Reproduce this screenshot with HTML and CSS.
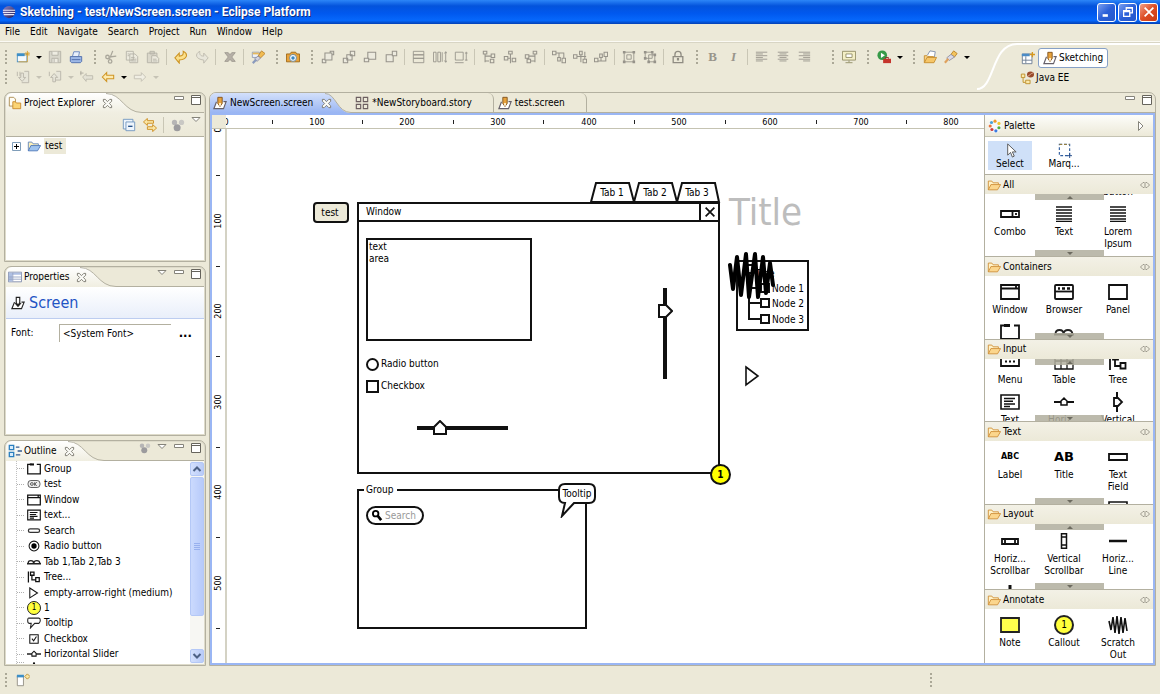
FILE: index.html
```html
<!DOCTYPE html>
<html lang="en">
<head>
  <meta charset="UTF-8">
  <title>Sketching - test/NewScreen.screen - Eclipse Platform</title>
  <link rel="stylesheet" href="styles.css">
</head>
<body>

  <!-- icon sprite -->
  <svg class="sprite" width="0" height="0" aria-hidden="true">
    <defs>
      <linearGradient id="tab-light" x1="0" y1="0" x2="0" y2="1"><stop offset="0" stop-color="#fff"/><stop offset="1" stop-color="#f0eee1"/></linearGradient>
      <linearGradient id="tab-blue" x1="0" y1="0" x2="0" y2="1"><stop offset="0" stop-color="#d3e0fb"/><stop offset="1" stop-color="#99b5f3"/></linearGradient>
      <linearGradient id="ball" x1="0" y1="0" x2="1" y2="1"><stop offset="0" stop-color="#8f86c8"/><stop offset="1" stop-color="#1d1750"/></linearGradient>
    </defs>
    <symbol id="eclipse" viewBox="0 0 16 16"><circle cx="8" cy="8" r="7" fill="url(#ball)"/><path d="M1 6h14M1 8.500h14M2 11h12" stroke="#e8e6f5" stroke-width="1.200"/></symbol>
    <symbol id="new" viewBox="0 0 16 16"><rect x="1.500" y="4.500" width="11" height="9" fill="#f4f9fd" stroke="#4b8fc0"/><path d="M1 4h9v3H1z" fill="#3c8fc7"/><path d="M3 13.500h10V8" fill="none" stroke="#d9a33b"/><path d="M13 1v7M9.500 4.500h7M11 2.500l4 4M15 2.500l-4 4" stroke="#d99c22"/></symbol>
    <symbol id="save" viewBox="0 0 16 16"><path d="M1.500 1.500h13v13h-13z" fill="#d8d6cb" stroke="#b2b0a6"/><path d="M4.500 2v4h7V2M4.500 14V9.500h7V14M7 10v4" fill="#eeece2" stroke="#b2b0a6"/></symbol>
    <symbol id="print" viewBox="0 0 16 16"><path d="M4 7l1.500-5H12L11 7" fill="#e8f0fb" stroke="#6080bc"/><path d="M1.500 7.500h13V13l-1.500 1.500H3L1.500 13z" fill="#9db8e6" stroke="#4a69a9"/><path d="M3 11h10" stroke="#4a69a9"/></symbol>
    <symbol id="cut" viewBox="0 0 16 16" fill="none" stroke="#aaa79b" stroke-width="1.500"><path d="M10 1L6 11M6 8l8-1"/><circle cx="4" cy="8" r="2"/><circle cx="7" cy="13" r="2"/></symbol>
    <symbol id="copy" viewBox="0 0 16 16" fill="#eceade" stroke="#b5b2a7"><path d="M1.500 1.500h8v10h-8zM5.500 4.500h6l3 3v7h-9z"/><path d="M7 8.500h4M7 10.500h6M7 12.500h6M3 4.500h2M3 6.500h2"/></symbol>
    <symbol id="paste" viewBox="0 0 16 16" fill="#dbd8cb" stroke="#b5b2a7"><path d="M1.500 3.500h11v11h-11zM4.500 1.500h5v3h-5z"/><path d="M6.500 6.500h5l3 3v5h-8z" fill="#eceade"/><path d="M8 10.500h4M8 12.500h5"/></symbol>
    <symbol id="undo" viewBox="0 0 16 16"><path d="M1 9l5-5.500v3.500C10 7 11 5 10.500 1.500c6 3 5 9-4.500 10V15z" fill="#fbe08b" stroke="#cc9322" stroke-width="1.200"/></symbol>
    <symbol id="redo" viewBox="0 0 16 16"><path d="M15 9l-5-5.500v3.500C6 7 5 5 5.500 1.500c-6 3-5 9 4.500 10V15z" fill="#e8e6da" stroke="#bbb8ac"/></symbol>
    <symbol id="delete" viewBox="0 0 16 16"><path d="M2 3l4 5-4 5h4l2-2.500L10 13h4l-4-5 4-5h-4L8 5.500 6 3z" fill="#b5afa6" stroke="#9f9a90"/></symbol>
    <symbol id="torch" viewBox="0 0 16 16"><path d="M8 5l3-4 4 3-3 4z" fill="#f3c45e" stroke="#b97f1f"/><path d="M3 9l5-4 4 3-6 4z" fill="#d9d9e6" stroke="#8f8f9f"/><path d="M1 14.500L5 10" stroke="#dfa25e" stroke-width="2.500"/></symbol>
    <symbol id="wand" viewBox="0 0 16 16"><path d="M1.500 2.500h8v6h-8z" fill="#eef1f8" stroke="#8f9ab5"/><path d="M2 3h7v2H2z" fill="#e6b95c"/><path d="M8 7l4-6 4 3-5 5z" fill="#f1bc52" stroke="#b9812a"/><path d="M4 10l4-3 3 2-4 4z" fill="#d3d3e0" stroke="#8f8f9f"/><path d="M2 15l4-4" stroke="#8b9bbd" stroke-width="2.500"/></symbol>
    <symbol id="camera" viewBox="0 0 16 16"><path d="M.5 4.500h4l1.500-2h5l1.500 2h3v9H.5z" fill="#e9a33a" stroke="#9a6514"/><circle cx="8" cy="9" r="4" fill="#f4f8fb" stroke="#65859c"/><circle cx="8" cy="9" r="2" fill="#3b87c2"/></symbol>
    <symbol id="front" viewBox="0 0 16 16" fill="#eceade" stroke="#96938a" stroke-width="1.200"><path d="M10.500 1.500h4v4h-4zM1.500 10.500h4v4h-4z"/><path d="M4.500 3.500h8v8h-8z"/></symbol>
    <symbol id="forward" viewBox="0 0 16 16" fill="#eceade" stroke="#96938a" stroke-width="1.200"><path d="M1.500 9.500h5v5h-5zM5.500 5.500h6v6h-6zM9.500 1.500h5v5h-5z"/></symbol>
    <symbol id="backward" viewBox="0 0 16 16" fill="#eceade" stroke="#96938a" stroke-width="1.200"><path d="M5.500 2.500h9v8h-9z"/><path d="M1.500 9.500h5v4h-5z"/></symbol>
    <symbol id="back" viewBox="0 0 16 16" fill="#eceade" stroke="#96938a" stroke-width="1.200"><path d="M2.500 5.500h8v8h-8z"/><path d="M9.500 1.500h5v5h-5z"/></symbol>
    <symbol id="same-w" viewBox="0 0 16 16" fill="none" stroke="#96938a"><path d="M1.500 1.500h12v4h-12zM1.500 5.500h12v4h-12zM1.500 9.500h12v5h-12z"/></symbol>
    <symbol id="same-h" viewBox="0 0 16 16" fill="none" stroke="#96938a"><path d="M.5 2.500h3v11h-3zM5.500 2.500h3v11h-3zM10.500 2.500v11M14.500 2v12M13 4l1.500-2L16 4M13 12l1.500 2 1.500-2"/></symbol>
    <symbol id="same-s" viewBox="0 0 16 16" fill="none" stroke="#96938a"><path d="M1.500 2.500h9v9h-9zM1 14.500h10M14 2v10M12.500 3.500h3M12.500 11.500h3"/></symbol>
    <symbol id="al-l" viewBox="0 0 16 16" fill="none" stroke="#96938a" stroke-width="1.200"><path d="M1.500 1.500h4v3h-4zM3.500 5v9M4 12.500h4M9.500 10.500h4v4h-4zM10.500 4.500h4v4h-4zM4 7h6"/></symbol>
    <symbol id="al-c" viewBox="0 0 16 16" fill="none" stroke="#96938a" stroke-width="1.200"><path d="M6.500 1.500h4v3h-4zM8.500 5v10M1.500 7.500h4v4h-4zM10.500 9.500h4v4h-4zM6 9.500h3"/></symbol>
    <symbol id="al-r" viewBox="0 0 16 16" fill="none" stroke="#96938a" stroke-width="1.200"><path d="M10.500 1.500h4v3h-4zM12.500 5v9M8 12.500h5M1.500 5.500h4v4h-4zM3.500 10.500h4v4h-4zM6 7h6"/></symbol>
    <symbol id="al-t" viewBox="0 0 16 16" fill="none" stroke="#96938a" stroke-width="1.200"><path d="M.5 1.500h4v4h-4zM5 3.500h9M6.500 8.500h3v4h-3zM11.500 9.500h4v5h-4zM8 4v4M13.500 4v5"/></symbol>
    <symbol id="al-m" viewBox="0 0 16 16" fill="none" stroke="#96938a" stroke-width="1.200"><path d="M.5 5.500h4v4h-4zM5 7.500h10M7.500 1.500h3v4h-3zM9 6v8M11.500 10.500h4v4h-4zM13.500 2v8"/></symbol>
    <symbol id="al-b" viewBox="0 0 16 16" fill="none" stroke="#96938a" stroke-width="1.200"><path d="M.5 9.500h4v4h-4zM5 12.500h8M6.500 4.500h3v4h-3zM11.500 2.500h4v5h-4zM8 9v4M13.500 8v5"/></symbol>
    <symbol id="group" viewBox="0 0 16 16" fill="none" stroke="#96938a"><path d="M2.500 2.500h11v11h-11zM5.500 5.500h5v5h-5z"/><path d="M1 1h3v3H1zM12 1h3v3h-3zM1 12h3v3H1zM12 12h3v3h-3z" fill="#96938a" stroke="none"/></symbol>
    <symbol id="ungroup" viewBox="0 0 16 16" fill="none" stroke="#96938a"><path d="M2.500 2.500h8v7h-8zM6.500 5.500h7v8h-7z"/><path d="M1 1h3v3H1zM9 1h3v3H9zM1 8h3v3H1zM12 12h3v3h-3zM5 12h3v3H5zM12 4h3v3h-3z" fill="#96938a" stroke="none"/></symbol>
    <symbol id="lock" viewBox="0 0 16 16" fill="none" stroke="#8f8c82" stroke-width="1.500"><path d="M2.500 7.500h11v7h-11zM4.500 7V5a3.500 3.500 0 0 1 7 0v2"/><path d="M8 9v3" stroke-width="2.500"/></symbol>
    <symbol id="t-left" viewBox="0 0 16 16" stroke="#98958b"><path d="M1 2.500h13M1 4.500h8M1 6.500h13M1 8.500h8M1 10.500h13M1 12.500h8"/></symbol>
    <symbol id="t-center" viewBox="0 0 16 16" stroke="#98958b"><path d="M2 2.500h12M4 4.500h8M2 6.500h12M4 8.500h8M2 10.500h12M4 12.500h8"/></symbol>
    <symbol id="t-right" viewBox="0 0 16 16" stroke="#98958b"><path d="M2 2.500h13M7 4.500h8M2 6.500h13M7 8.500h8M2 10.500h13M7 12.500h8"/></symbol>
    <symbol id="monitor" viewBox="0 0 16 16"><path d="M.5 1.500h15v10H.5z" fill="#f4efc6" stroke="#8f8a62"/><path d="M4.500 4.500h7v4h-7z" fill="#fff" stroke="#8f8a62"/><path d="M8 12v2M4 14.500h8" stroke="#8f8a62"/></symbol>
    <symbol id="run" viewBox="0 0 16 16"><circle cx="6" cy="6" r="5.500" fill="#379a48"/><path d="M4.500 3v6l4.500-3z" fill="#fff"/><path d="M7 10h9v5H7z" fill="#c5342c"/><path d="M10 10V8.500h3V10" fill="none" stroke="#8e1d1d"/></symbol>
    <symbol id="open" viewBox="0 0 16 16"><path d="M5 6l3-5 6 1-1 6" fill="#fff" stroke="#7b8ba9"/><path d="M1.500 14.500V6.500h3l1 1H12v2" fill="#f9d488" stroke="#c58b2d"/><path d="M1.500 14.500l3-6h11l-3 6z" fill="#f6c668" stroke="#c58b2d"/></symbol>
    <symbol id="folder" viewBox="0 0 16 16"><path d="M1.500 13.500v-10h4l1.500 2h6v2" fill="#fff2c8" stroke="#cf8e36"/><path d="M1.500 13.500l3-6h11l-3.500 6z" fill="#fbd68d" stroke="#cf8e36"/></symbol>
    <symbol id="project" viewBox="0 0 16 16"><path d="M1.500 13.500v-10h4l1.500 2h6v2" fill="#fdf1b9" stroke="#5f84bd"/><path d="M1.500 13.500l3-6h11l-3.500 6z" fill="#9fc4ef" stroke="#4a75b8"/></symbol>
    <symbol id="explorer" viewBox="0 0 16 16"><path d="M1.500 11.500v-10h5l2 2v8z" fill="#fffdf5" stroke="#a8894b"/><path d="M5.500 14.500v-8h3l1 1.500h5v6.500z" fill="#fbd475" stroke="#c8882a"/></symbol>
    <symbol id="collapse" viewBox="0 0 16 16" fill="#eef5fc" stroke="#6d93be"><path d="M1.500 1.500h11v11h-11z"/><path d="M4.500 4.500h10v10h-10z"/><path d="M7 9.500h5" stroke="#1e4c86" stroke-width="1.500"/></symbol>
    <symbol id="link" viewBox="0 0 16 16" fill="#fae6a4" stroke="#cc8a1d"><path d="M.5 4.500l4.500-4v2.500h7v3H5v2.500z"/><path d="M15.500 11.500l-4.500 4V13H5v-3h6V7.500z"/></symbol>
    <symbol id="focus" viewBox="0 0 16 16" fill="#b6b5b5"><circle cx="4" cy="5" r="3"/><circle cx="12" cy="5" r="3" fill="#c9c8c4"/><circle cx="7" cy="11" r="4" fill="#9c9b9e"/></symbol>
    <symbol id="props" viewBox="0 0 16 16"><path d="M.5 2.500h15v11H.5z" fill="#fff" stroke="#7b88a8"/><path d="M1 3h14v2.500H1zM1 3h4v10H1z" fill="#aebfe2"/><path d="M5.500 3v10M1 8h14M1 10.500h14" stroke="#93a1c1"/></symbol>
    <symbol id="outline" viewBox="0 0 16 16" fill="#d9ecfa" stroke="#2b7fc0" stroke-width="1.500"><path d="M1.500 1.500h5v5h-5zM1.500 9.500h5v5h-5z"/><path d="M9 3.500h4M11 8h5M9 12.500h5" stroke="#345c92"/></symbol>
    <symbol id="pencil" viewBox="0 0 16 16"><path d="M4 6.500L1 14.500h11l3-8h-3" fill="#fff" stroke="#655f69" stroke-width="1.300"/><path d="M5.500 1.500h5v7L8 12 5.500 8.500z" fill="#e7a23c" stroke="#7b4e1b"/><path d="M7 8h2v3H7z" fill="#fff3d6"/></symbol>
    <symbol id="screen" viewBox="0 0 16 16" fill="#fff" stroke="#222" stroke-width="1.300"><path d="M4 7L1 14.500h11l3-7.500h-3"/><path d="M6 1.500h4v6L8 11 6 7.500zM4.500 8L8 12l3.500-4"/></symbol>
    <symbol id="story" viewBox="0 0 16 16" fill="none" stroke="#6c5f60" stroke-width="1.300"><path d="M1.500 1.500h5v5h-5zM9.500 1.500h5v5h-5zM1.500 9.500h5v5h-5zM9.500 9.500h5v5h-5z"/></symbol>
    <symbol id="persp" viewBox="0 0 16 16"><path d="M1.500 3.500h11v11h-11z" fill="#fff" stroke="#67788f"/><path d="M1 3h9v3H1z" fill="#4c8cc6"/><path d="M5.500 6v8M1.500 10.500h11" stroke="#67788f"/><path d="M13 1v6M10 4h6" stroke="#d7981e" stroke-width="1.500"/></symbol>
    <symbol id="javaee" viewBox="0 0 16 16"><path d="M1.500 3.500h4v4h-4zM3.500 8v5H6M6.500 10.500h5v4h-5z" fill="#fbe9ab" stroke="#bb8c26"/><ellipse cx="12" cy="4" rx="4" ry="3.500" fill="#9a4a2a"/><path d="M9 6c2-1 3-3 6-4" stroke="#e4b9a0" fill="none"/></symbol>
    <symbol id="fastview" viewBox="0 0 16 16"><path d="M1.500 3.500h7v11h-7z" fill="#fff" stroke="#8f8c80"/><path d="M1 2h8v3H1z" fill="#3c8fc7"/><path d="M13 1l3 3-3 3-3-3z" fill="#fae6a4" stroke="#b88a2d"/></symbol>
    <symbol id="arr-l" viewBox="0 0 16 16"><path d="M1.500 8l5-5v3h8v4h-8v3z" fill="#fdeaae" stroke="#cf9524" stroke-width="1.200"/></symbol>
    <symbol id="arr-r" viewBox="0 0 16 16"><path d="M14.500 8l-5-5v3h-8v4h8v3z" fill="#f0eee3" stroke="#c2bfb2"/></symbol>
    <symbol id="arr-last" viewBox="0 0 16 16"><path d="M3 8l4-4v2.500h7.500v4H7v2.500z" fill="#e4e2d6" stroke="#bcb9ad"/><path d="M1 1v5M0 3.500h4" stroke="#aaa79b"/></symbol>
    <symbol id="ann-n" viewBox="0 0 16 16" fill="#e7e5d9" stroke="#b7b4a8"><path d="M9.500 1.500h5v13h-8M1.500 2v5M4.500 2v5"/><path d="M5.500 3.500h3v5h2.500L7 13 3 8.500h2.500z"/></symbol>
    <symbol id="ann-p" viewBox="0 0 16 16" fill="#e7e5d9" stroke="#b7b4a8"><path d="M9.500 1.500h5v10h-8M1.500 2v5"/><path d="M5.500 13.500h3v-5h2.500L7 4 3 8.500h2.500z"/></symbol>
    <symbol id="x" viewBox="0 0 12 12"><path d="M1.500 1.500h2L6 4l2.500-2.500h2v2L8 6l2.500 2.500v2h-2L6 8l-2.500 2.500h-2v-2L4 6 1.500 3.500z" fill="#fdfdf9" stroke="#77756b"/></symbol>
    <symbol id="min" viewBox="0 0 12 12"><path d="M1.500 2.500h9v3h-9z" fill="#fff" stroke="#85837a"/></symbol>
    <symbol id="max" viewBox="0 0 12 12"><path d="M1.500 1.500h9v9h-9zM1.500 3.500h9" fill="#fff" stroke="#66645c"/></symbol>
    <symbol id="menu-dn" viewBox="0 0 12 12"><path d="M2 2.500h8L6 6.500z" fill="#fff" stroke="#85837a"/></symbol>
    <symbol id="palette" viewBox="0 0 16 16"><circle cx="8" cy="8" r="7.500" fill="#f4f7fb"/><g><circle cx="8" cy="2.500" r="1.800" fill="#f09a26"/><circle cx="12.500" cy="5" r="1.800" fill="#f2c72c"/><circle cx="12.500" cy="10" r="1.800" fill="#54ad3e"/><circle cx="9" cy="13.500" r="1.800" fill="#3c7be0"/><circle cx="4.500" cy="12" r="1.800" fill="#cc3e3e"/><circle cx="2.500" cy="8" r="1.800" fill="#e9763b"/><circle cx="4" cy="4" r="1.800" fill="#47a2d8"/></g></symbol>
    <symbol id="pin" viewBox="0 0 12 8"><path d="M5 1.500H4L1.500 4 4 6.500h1M7 1.500h1L10.500 4 8 6.500H7M6 1v6" fill="none" stroke="#9b988c"/></symbol>

    <!-- widget glyphs, shared by outline and palette -->
    <symbol id="w-group" viewBox="0 0 20 16" fill="none" stroke="#111" stroke-width="1.800"><path d="M7 1.500H1v13.500h18V1.500h-5"/><path d="M4 1.500h6" stroke-width="3"/></symbol>
    <symbol id="w-ok" viewBox="0 0 20 16" fill="#eee" stroke="#222"><rect x="1.500" y="3" width="17" height="10" rx="4"/><circle cx="7" cy="8" r="2"/><path d="M11 5.500v5M14 5.500L11 8l3 2.500"/></symbol>
    <symbol id="w-window" viewBox="0 0 20 16" fill="none" stroke="#111" stroke-width="1.800"><path d="M1 1h18v14H1zM1 4.500h18M16 2v2"/></symbol>
    <symbol id="w-browser" viewBox="0 0 20 16" fill="none" stroke="#111" stroke-width="1.800"><rect x="1" y="1" width="18" height="14" rx="1"/><path d="M1 7.500h18"/><path d="M4 4.500h2M8 4.500h3M13 4.500h3" stroke-width="2.500"/></symbol>
    <symbol id="w-panel" viewBox="0 0 20 16"><path d="M1 1h18v14H1z" fill="none" stroke="#111" stroke-width="1.800"/></symbol>
    <symbol id="w-area" viewBox="0 0 20 16" fill="none" stroke="#111" stroke-width="1.600"><path d="M1 1h18v14H1zM4 4.500h11M4 7.200h9M4 10h11M4 12.500h6"/></symbol>
    <symbol id="w-search" viewBox="0 0 20 16"><rect x="2" y="5" width="16" height="5" rx="2.500" fill="none" stroke="#333" stroke-width="1.800"/></symbol>
    <symbol id="w-radio" viewBox="0 0 20 16"><circle cx="10" cy="8" r="7" fill="none" stroke="#111" stroke-width="1.500"/><circle cx="10" cy="8" r="3.800"/></symbol>
    <symbol id="w-tabs" viewBox="0 0 20 16" fill="none" stroke="#222" stroke-width="1.800"><path d="M1.500 10q0-4 4-4t4 4q.5-4 4.500-4t4.500 4M0 10.500h20"/></symbol>
    <symbol id="w-tree" viewBox="0 0 20 16" fill="none" stroke="#111" stroke-width="1.800"><path d="M2 0v16M5 1h5v4.500H5zM7 6v6h5M12.500 9h5v5.500h-5z"/></symbol>
    <symbol id="w-tri" viewBox="0 0 20 16"><path d="M4 .8l11 7.200-11 7z" fill="none" stroke="#111" stroke-width="1.500"/></symbol>
    <symbol id="w-tip" viewBox="0 0 20 16"><path d="M3 1h14q2 0 2 3t-2 4.500h-6L5 15l1-6.500H3Q1 8.500 1 4.500T3 1z" fill="none" stroke="#222" stroke-width="1.500"/></symbol>
    <symbol id="w-check" viewBox="0 0 20 16" fill="none" stroke="#111" stroke-width="1.500"><path d="M4 2h12v12H4zM7 7.500l2.500 3 4-6"/></symbol>
    <symbol id="w-hs" viewBox="0 0 20 16"><path d="M0 8h20" stroke="#111" stroke-width="2"/><path d="M7 7l3-3 3 3v4H7z" fill="#fff" stroke="#111" stroke-width="1.500"/></symbol>
    <symbol id="w-vs" viewBox="0 0 20 20"><path d="M9 0v20" stroke="#111" stroke-width="2"/><path d="M6 6h4l4 4-4 4H6z" fill="#fff" stroke="#111" stroke-width="1.800"/></symbol>
    <symbol id="w-combo" viewBox="0 0 20 16"><path d="M1 5h18v6H1zM12.500 5v6M16 7v2" fill="none" stroke="#111" stroke-width="1.800"/></symbol>
    <symbol id="w-lines" viewBox="0 0 20 16"><path d="M2 1h16M2 4h16M2 7h16M2 10h16M2 13h16M2 15.500h16" stroke="#111" stroke-width="1.500"/></symbol>
    <symbol id="w-menu" viewBox="0 0 20 16"><path d="M1 3h18v9H1z" fill="none" stroke="#111" stroke-width="1.800"/><path d="M5 7.500h2M9 7.500h2M13 7.500h2" stroke="#111" stroke-width="2"/></symbol>
    <symbol id="w-table" viewBox="0 0 20 16"><path d="M1 1h18v14H1zM7 1v14M13 1v14M1 7h18" fill="none" stroke="#111" stroke-width="1.300"/></symbol>
    <symbol id="w-field" viewBox="0 0 20 16"><path d="M1 5h18v6H1z" fill="none" stroke="#111" stroke-width="1.800"/></symbol>
    <symbol id="w-hbar" viewBox="0 0 20 16"><path d="M2 6h16v5H2zM5 6v5M15 6v5" fill="none" stroke="#111" stroke-width="1.800"/></symbol>
    <symbol id="w-vbar" viewBox="0 0 20 16"><path d="M7.500.8h5v14.500h-5zM7.500 4h5M7.500 12h5" fill="none" stroke="#111" stroke-width="1.500"/></symbol>
    <symbol id="w-line" viewBox="0 0 20 16"><path d="M1 8h18" stroke="#111" stroke-width="2.500"/></symbol>
    <symbol id="w-vline" viewBox="0 0 20 16"><path d="M10 0v16" stroke="#111" stroke-width="3"/></symbol>
    <symbol id="w-note" viewBox="0 0 20 16"><path d="M1 1h18v14H1z" fill="#ffff4d" stroke="#222" stroke-width="1.800"/></symbol>
    <symbol id="w-scratch" viewBox="0 0 20 20"><path d="M1 6l2 9L5 2l2 16L9 1l2 18 2-17 2 16 2-15 2 13" fill="none" stroke="#111" stroke-width="1.600"/></symbol>
    <symbol id="w-cursor" viewBox="0 0 16 16"><path d="M5 1v12l3-3 2 5 2-1-2-4.500h4z" fill="#fff" stroke="#555"/></symbol>
    <symbol id="w-marquee" viewBox="0 0 16 16"><path d="M2.500 1.500h11v12h-11z" fill="none" stroke="#2e5c9e" stroke-width="1.200" stroke-dasharray="3 2"/><path d="M2.500 1.500h11" stroke="#a8842c" stroke-dasharray="3 2"/><path d="M11 13.500h5M13.500 11v5" stroke="#224a88"/></symbol>
  </svg>

  <header class="titlebar">
    <svg class="app-icon"><use href="#eclipse"/></svg>
    <h1>Sketching - test/NewScreen.screen - Eclipse Platform</h1>
    <div class="win-buttons">
      <button aria-label="Minimize"><svg viewBox="0 0 16 16"><path d="M3 12h6" stroke="#fff" stroke-width="3"/></svg></button>
      <button aria-label="Restore"><svg viewBox="0 0 16 16" fill="none" stroke="#fff" stroke-width="1.500"><path d="M6 6V3h7v6h-3M6 3.500h7M3 6.500h7V13H3zM3 7.500h7"/></svg></button>
      <button class="close" aria-label="Close"><svg viewBox="0 0 16 16"><path d="M3 3l10 10M13 3L3 13" stroke="#fff" stroke-width="2"/></svg></button>
    </div>
  </header>

  <nav class="menubar">
    <button>File</button><button>Edit</button><button>Navigate</button><button>Search</button><button>Project</button><button>Run</button><button>Window</button><button>Help</button>
  </nav>

  <div class="coolbar">
    <div class="toolbars">
      <div class="toolbar">
        <span class="grip first"></span>
        <button class="tool" aria-label="New"><svg><use href="#new"/></svg></button><button class="drop" aria-label="New menu"></button>
        <button class="tool" aria-label="Save"><svg><use href="#save"/></svg></button>
        <button class="tool" aria-label="Print"><svg><use href="#print"/></svg></button>
        <span class="grip"></span>
        <button class="tool" aria-label="Cut"><svg><use href="#cut"/></svg></button>
        <button class="tool" aria-label="Copy"><svg><use href="#copy"/></svg></button>
        <button class="tool" aria-label="Paste"><svg><use href="#paste"/></svg></button>
        <span class="sep"></span>
        <button class="tool" aria-label="Undo"><svg><use href="#undo"/></svg></button>
        <button class="tool" aria-label="Redo"><svg><use href="#redo"/></svg></button>
        <span class="sep"></span>
        <button class="tool" aria-label="Delete"><svg><use href="#delete"/></svg></button>
        <span class="sep"></span>
        <button class="tool" aria-label="Search"><svg><use href="#wand"/></svg></button>
        <span class="grip"></span>
        <button class="tool" aria-label="Snapshot"><svg><use href="#camera"/></svg></button>
        <span class="grip"></span>
        <button class="tool" aria-label="Bring to front"><svg><use href="#front"/></svg></button>
        <button class="tool" aria-label="Bring forward"><svg><use href="#forward"/></svg></button>
        <button class="tool" aria-label="Send backward"><svg><use href="#backward"/></svg></button>
        <button class="tool" aria-label="Send to back"><svg><use href="#back"/></svg></button>
        <span class="sep"></span>
        <button class="tool" aria-label="Match width"><svg><use href="#same-w"/></svg></button>
        <button class="tool" aria-label="Match height"><svg><use href="#same-h"/></svg></button>
        <button class="tool" aria-label="Match size"><svg><use href="#same-s"/></svg></button>
        <span class="sep"></span>
        <button class="tool" aria-label="Align left"><svg><use href="#al-l"/></svg></button>
        <button class="tool" aria-label="Align center"><svg><use href="#al-c"/></svg></button>
        <button class="tool" aria-label="Align right"><svg><use href="#al-r"/></svg></button>
        <span class="sep"></span>
        <button class="tool" aria-label="Align top"><svg><use href="#al-t"/></svg></button>
        <button class="tool" aria-label="Align middle"><svg><use href="#al-m"/></svg></button>
        <button class="tool" aria-label="Align bottom"><svg><use href="#al-b"/></svg></button>
        <span class="sep"></span>
        <button class="tool" aria-label="Group"><svg><use href="#group"/></svg></button>
        <button class="tool" aria-label="Ungroup"><svg><use href="#ungroup"/></svg></button>
        <span class="sep"></span>
        <button class="tool" aria-label="Lock"><svg><use href="#lock"/></svg></button>
        <span class="grip"></span>
        <button class="tool letter">B</button>
        <button class="tool letter italic">I</button>
        <span class="sep"></span>
        <button class="tool" aria-label="Text left"><svg><use href="#t-left"/></svg></button>
        <button class="tool" aria-label="Text center"><svg><use href="#t-center"/></svg></button>
        <button class="tool" aria-label="Text right"><svg><use href="#t-right"/></svg></button>
        <span class="grip wide"></span>
        <button class="tool" aria-label="Presentation"><svg><use href="#monitor"/></svg></button>
        <span class="grip"></span>
        <button class="tool" aria-label="Run"><svg><use href="#run"/></svg></button><button class="drop" aria-label="Run menu"></button>
        <span class="grip"></span>
        <button class="tool" aria-label="Open"><svg><use href="#open"/></svg></button>
        <button class="tool" aria-label="Find"><svg><use href="#torch"/></svg></button><button class="drop" aria-label="Find menu"></button>
      </div>
      <div class="toolbar">
        <span class="grip first"></span>
        <button class="tool" aria-label="Next annotation"><svg><use href="#ann-n"/></svg></button><button class="drop off" aria-label="Next menu"></button>
        <button class="tool" aria-label="Previous annotation"><svg><use href="#ann-p"/></svg></button><button class="drop off" aria-label="Previous menu"></button>
        <button class="tool" aria-label="Last edit"><svg><use href="#arr-last"/></svg></button>
        <button class="tool" aria-label="Back"><svg><use href="#arr-l"/></svg></button><button class="drop" aria-label="Back menu"></button>
        <button class="tool" aria-label="Forward"><svg><use href="#arr-r"/></svg></button><button class="drop off" aria-label="Forward menu"></button>
      </div>
    </div>
    <svg class="swoop" viewBox="0 0 40 48"><path d="M0 46C18 46 14 1 40 1" fill="none" stroke="#fff" stroke-width="2"/></svg>
    <div class="perspectives">
      <div class="toolbar">
        <button class="tool" aria-label="Open perspective"><svg><use href="#persp"/></svg></button>
        <button class="persp active"><svg><use href="#pencil"/></svg>Sketching</button>
      </div>
      <div class="toolbar">
        <button class="persp"><svg><use href="#javaee"/></svg>Java EE</button>
      </div>
    </div>
  </div>

  <main class="workbench">
    <div class="sidebar">
      <section class="view">
        <div class="view-head">
          <h2 class="tab"><svg><use href="#explorer"/></svg>Project Explorer<svg class="x"><use href="#x"/></svg></h2>
          <svg class="curve" viewBox="0 0 36 20" preserveAspectRatio="none"><path d="M0 0C16 0 18 19.500 36 19.500V20H0z" fill="url(#tab-light)"/><path d="M0 .5C16 .5 18 19.500 36 19.500" fill="none" stroke="#b3b0a0"/></svg>
          <div class="view-tools"><button aria-label="Minimize view"><svg><use href="#min"/></svg></button><button aria-label="Maximize view"><svg><use href="#max"/></svg></button></div>
        </div>
        <div class="view-bar">
          <button class="tool" aria-label="Collapse all"><svg><use href="#collapse"/></svg></button>
          <button class="tool" aria-label="Link with editor"><svg><use href="#link"/></svg></button>
          <span class="sep"></span>
          <button class="tool" aria-label="Focus"><svg><use href="#focus"/></svg></button>
          <button class="mini" aria-label="View menu"><svg><use href="#menu-dn"/></svg></button>
        </div>
        <div class="view-body tree">
          <button class="expand" aria-label="Expand"><svg viewBox="0 0 9 9"><path d="M.5.5h8v8h-8z" fill="#fff" stroke="#7f9db9"/><path d="M2 4.500h5M4.500 2v5" stroke="#000"/></svg></button>
          <svg class="ico"><use href="#project"/></svg>
          <span class="selected">test</span>
        </div>
      </section>

      <section class="view">
        <div class="view-head">
          <h2 class="tab"><svg><use href="#props"/></svg>Properties<svg class="x"><use href="#x"/></svg></h2>
          <svg class="curve" viewBox="0 0 36 20" preserveAspectRatio="none"><path d="M0 0C16 0 18 19.500 36 19.500V20H0z" fill="url(#tab-light)"/><path d="M0 .5C16 .5 18 19.500 36 19.500" fill="none" stroke="#b3b0a0"/></svg>
          <div class="view-tools"><button aria-label="View menu"><svg><use href="#menu-dn"/></svg></button><button aria-label="Minimize view"><svg><use href="#min"/></svg></button><button aria-label="Maximize view"><svg><use href="#max"/></svg></button></div>
        </div>
        <div class="view-body">
          <h3 class="form-title"><svg><use href="#screen"/></svg>Screen</h3>
          <div class="form-row">
            <label for="font">Font:</label>
            <input id="font" type="text" value="&lt;System Font&gt;">
            <button aria-label="Choose font">...</button>
          </div>
        </div>
      </section>

      <section class="view outline-view">
        <div class="view-head">
          <h2 class="tab"><svg><use href="#outline"/></svg>Outline<svg class="x"><use href="#x"/></svg></h2>
          <svg class="curve" viewBox="0 0 36 20" preserveAspectRatio="none"><path d="M0 0C16 0 18 19.500 36 19.500V20H0z" fill="url(#tab-light)"/><path d="M0 .5C16 .5 18 19.500 36 19.500" fill="none" stroke="#b3b0a0"/></svg>
          <div class="view-tools"><button aria-label="Focus"><svg><use href="#focus"/></svg></button><button aria-label="View menu"><svg><use href="#menu-dn"/></svg></button><button aria-label="Minimize view"><svg><use href="#min"/></svg></button><button aria-label="Maximize view"><svg><use href="#max"/></svg></button></div>
        </div>
        <div class="view-body outline-body">
          <ul class="outline">
            <li><svg><use href="#w-group"/></svg>Group</li>
            <li><svg><use href="#w-ok"/></svg>test</li>
            <li><svg><use href="#w-window"/></svg>Window</li>
            <li><svg><use href="#w-area"/></svg>text...</li>
            <li><svg><use href="#w-search"/></svg>Search</li>
            <li><svg><use href="#w-radio"/></svg>Radio button</li>
            <li><svg><use href="#w-tabs"/></svg>Tab 1,Tab 2,Tab 3</li>
            <li><svg><use href="#w-tree"/></svg>Tree...</li>
            <li><svg><use href="#w-tri"/></svg>empty-arrow-right (medium)</li>
            <li><span class="dot">1</span>1</li>
            <li><svg><use href="#w-tip"/></svg>Tooltip</li>
            <li><svg><use href="#w-check"/></svg>Checkbox</li>
            <li><svg><use href="#w-hs"/></svg>Horizontal Slider</li>
            <li class="peek"><svg><use href="#w-vline"/></svg></li>
          </ul>
          <div class="scrollbar">
            <button aria-label="Scroll up"><svg viewBox="0 0 10 10"><path d="M1.500 7L5 3.500 8.500 7" fill="none" stroke="#4d6185" stroke-width="2"/></svg></button>
            <div class="thumb"><svg viewBox="0 0 10 10"><path d="M2 1.500h6M2 3.500h6M2 5.500h6M2 7.500h6" stroke="#98b0ee"/></svg></div>
            <div class="track"></div>
            <button aria-label="Scroll down"><svg viewBox="0 0 10 10"><path d="M1.500 3L5 6.500 8.500 3" fill="none" stroke="#4d6185" stroke-width="2"/></svg></button>
          </div>
        </div>
      </section>
    </div>

    <section class="editor">
      <div class="editor-head">
        <div class="etab active"><svg><use href="#pencil"/></svg>NewScreen.screen<svg class="x"><use href="#x"/></svg></div>
        <svg class="ecurve" viewBox="0 0 26 20" preserveAspectRatio="none"><path d="M0 0C11 0 12 20 26 20H0z" fill="url(#tab-blue)"/><path d="M0 .5C11 .5 12 19.500 26 19.500" fill="none" stroke="#b3b0a0"/></svg>
        <div class="etab story"><svg><use href="#story"/></svg>*NewStoryboard.story</div>
        <div class="etab last"><svg><use href="#pencil"/></svg>test.screen</div>
        <div class="view-tools"><button aria-label="Minimize editor"><svg><use href="#min"/></svg></button><button aria-label="Maximize editor"><svg><use href="#max"/></svg></button></div>
      </div>

      <div class="editor-body">
        <div class="sheet">
          <svg class="ruler-h">
            <g stroke="#222"><path d="M60.500 5v4M150.500 5v4M241.500 5v4M331.500 5v4M422.500 5v4M513.500 5v4M604.500 5v4M694.500 5v4"/></g>
            <g text-anchor="middle"><text x="14" y="10">0</text><text x="105" y="10">100</text><text x="195" y="10">200</text><text x="286" y="10">300</text><text x="377" y="10">400</text><text x="467" y="10">500</text><text x="558" y="10">600</text><text x="649" y="10">700</text><text x="739" y="10">800</text></g>
            <path d="M0 0h14v14H0z" fill="#ece9d8"/>
          </svg>
          <svg class="ruler-v">
            <g stroke="#222"><path d="M4 46.500h4M4 137.500h4M4 227.500h4M4 318.500h4M4 408.500h4M4 499.500h4"/></g>
            <g text-anchor="middle"><text transform="translate(9 1) rotate(-90)">0</text><text transform="translate(9 92) rotate(-90)">100</text><text transform="translate(9 182) rotate(-90)">200</text><text transform="translate(9 273) rotate(-90)">300</text><text transform="translate(9 363) rotate(-90)">400</text><text transform="translate(9 454) rotate(-90)">500</text></g>
          </svg>

          <div class="canvas">
            <button class="w-button">test</button>

            <div class="w-window">
              <div class="w-window-title"><span>Window</span><button aria-label="Close window"><svg viewBox="0 0 16 16"><path d="M3 3l10 10M13 3L3 13" stroke="#111" stroke-width="2"/></svg></button></div>
            </div>

            <svg class="w-tabset" viewBox="0 0 132 23">
              <g fill="#fff" stroke="#111" stroke-width="2"><path d="M2 21L7 2h33l5 19zM45 21l5-19h33l5 19zM88 21l5-19h33l4 19z"/></g>
              <g text-anchor="middle"><text x="23" y="15">Tab 1</text><text x="66" y="15">Tab 2</text><text x="108" y="15">Tab 3</text></g>
            </svg>

            <textarea class="w-textarea" aria-label="Text area">text
area</textarea>
            <label class="w-choice radio"><input type="radio" name="choice">Radio button</label>
            <label class="w-choice check"><input type="checkbox">Checkbox</label>
            <input class="w-slider horizontal" type="range" value="20" aria-label="Horizontal slider">
            <input class="w-slider vertical" type="range" value="20" aria-label="Vertical slider">

            <span class="w-title">Title</span>

            <svg class="w-treebox" viewBox="0 0 82 82">
              <path d="M9 11h71v69H9z" fill="#fff" stroke="#111" stroke-width="2"/>
              <path d="M21 20v49h12M21 38h12M21 53h12" fill="none" stroke="#111" stroke-width="2"/>
              <text x="28" y="27">Tree</text>
              <g fill="#fff" stroke="#111" stroke-width="2"><path d="M17 15h8v8h-8zM33 34h8v8h-8zM33 49h8v8h-8zM33 65h8v8h-8z"/></g>
              <text x="44" y="42">Node 1</text><text x="44" y="57">Node 2</text><text x="44" y="73">Node 3</text>
              <path d="M2 15l3 24L9 7l4 38 5-41 3 43 6-43 3 43 5-40 3 36 4-30 3 22" fill="none" stroke="#000" stroke-width="4" stroke-linejoin="round" stroke-linecap="round"/>
            </svg>

            <svg class="w-arrow" viewBox="0 0 16 22"><path d="M2 2l12 9-12 9z" fill="#fff" stroke="#111" stroke-width="1.600"/></svg>

            <fieldset class="w-group">
              <legend>Group</legend>
            </fieldset>
            <label class="w-search"><svg viewBox="0 0 12 12"><circle cx="4" cy="4" r="3" fill="none" stroke="#000" stroke-width="2"/><path d="M6 6l4 5" stroke="#000" stroke-width="3"/></svg><input type="text" placeholder="Search" aria-label="Search"></label>

            <svg class="w-tooltip" viewBox="0 0 40 36">
              <path d="M8 2h24q6 0 6 6v7q0 6-6 6H17L5 34l3-13q-6 0-6-6V8q0-6 6-6z" fill="#fff" stroke="#111" stroke-width="2"/>
              <text x="20" y="15" text-anchor="middle">Tooltip</text>
            </svg>

            <span class="w-callout">1</span>
          </div>
        </div>

        <aside class="palette">
          <div class="palette-head"><svg class="ico"><use href="#palette"/></svg><span>Palette</span><button aria-label="Hide palette"><svg viewBox="0 0 8 12"><path d="M1.500 1.500v9L6 6z" fill="#fff" stroke="#85837a"/></svg></button></div>
          <div class="palette-tools">
            <button class="item on"><svg><use href="#w-cursor"/></svg>Select</button>
            <button class="item"><svg><use href="#w-marquee"/></svg>Marq...</button>
          </div>

          <div class="drawer">
            <h3><svg class="ico"><use href="#folder"/></svg>All<svg class="pin"><use href="#pin"/></svg></h3>
            <div class="drawer-body">
              <span class="more up"></span>
              <div class="items scrolled">
                <button class="item third">Radio<br>button</button>
                <button class="item"><svg><use href="#w-combo"/></svg>Combo</button>
                <button class="item"><svg><use href="#w-lines"/></svg>Text</button>
                <button class="item"><svg><use href="#w-lines"/></svg>Lorem Ipsum</button>
              </div>
              <span class="more down"></span>
            </div>
          </div>

          <div class="drawer">
            <h3><svg class="ico"><use href="#folder"/></svg>Containers<svg class="pin"><use href="#pin"/></svg></h3>
            <div class="drawer-body">
              <div class="items">
                <button class="item"><svg><use href="#w-window"/></svg>Window</button>
                <button class="item"><svg><use href="#w-browser"/></svg>Browser</button>
                <button class="item"><svg><use href="#w-panel"/></svg>Panel</button>
                <button class="item" aria-label="Group"><svg><use href="#w-group"/></svg></button>
                <button class="item" aria-label="Tabs"><svg><use href="#w-tabs"/></svg></button>
              </div>
              <span class="more down"></span>
            </div>
          </div>

          <div class="drawer">
            <h3><svg class="ico"><use href="#folder"/></svg>Input<svg class="pin"><use href="#pin"/></svg></h3>
            <div class="drawer-body">
              <span class="more up"></span>
              <div class="items nudged">
                <button class="item"><svg><use href="#w-menu"/></svg>Menu</button>
                <button class="item"><svg><use href="#w-table"/></svg>Table</button>
                <button class="item"><svg><use href="#w-tree"/></svg>Tree</button>
                <button class="item"><svg><use href="#w-area"/></svg>Text</button>
                <button class="item"><svg><use href="#w-hs"/></svg>Horiz...</button>
                <button class="item"><svg class="big"><use href="#w-vs"/></svg>Vertical</button>
              </div>
              <span class="more down"></span>
            </div>
          </div>

          <div class="drawer">
            <h3><svg class="ico"><use href="#folder"/></svg>Text<svg class="pin"><use href="#pin"/></svg></h3>
            <div class="drawer-body">
              <div class="items">
                <button class="item"><b class="abc">ABC</b>Label</button>
                <button class="item"><b class="ab">AB</b>Title</button>
                <button class="item"><svg><use href="#w-field"/></svg>Text<br>Field</button>
                <button class="item third" aria-label="Text area"><svg><use href="#w-area"/></svg></button>
              </div>
              <span class="more down"></span>
            </div>
          </div>

          <div class="drawer tall">
            <h3><svg class="ico"><use href="#folder"/></svg>Layout<svg class="pin"><use href="#pin"/></svg></h3>
            <div class="drawer-body">
              <span class="more up"></span>
              <div class="items lowered">
                <button class="item"><svg><use href="#w-hbar"/></svg>Horiz... Scrollbar</button>
                <button class="item"><svg><use href="#w-vbar"/></svg>Vertical Scrollbar</button>
                <button class="item"><svg><use href="#w-line"/></svg>Horiz...<br>Line</button>
                <button class="item" aria-label="Vertical line"><svg><use href="#w-vline"/></svg></button>
              </div>
              <span class="more down"></span>
            </div>
          </div>

          <div class="drawer final">
            <h3><svg class="ico"><use href="#folder"/></svg>Annotate<svg class="pin"><use href="#pin"/></svg></h3>
            <div class="drawer-body">
              <div class="items">
                <button class="item"><svg><use href="#w-note"/></svg>Note</button>
                <button class="item"><span class="dot big">1</span>Callout</button>
                <button class="item"><svg class="big"><use href="#w-scratch"/></svg>Scratch Out</button>
              </div>
            </div>
          </div>
        </aside>
      </div>
    </section>
  </main>

  <footer class="statusbar">
    <span class="grip first"></span>
    <button class="tool" aria-label="Fast view"><svg><use href="#fastview"/></svg></button>
    <span class="spacer"></span>
    <span class="grip end"></span>
  </footer>

</body>
</html>
```
FILE: styles.css
```css
* { box-sizing: border-box; }
body { margin: 0; height: 100vh; display: flex; flex-direction: column; overflow: hidden; background: #ece9d8; color: #000; font: 10px/12px "DejaVu Sans Condensed", Tahoma, Roboto, sans-serif; }
button, input, textarea { font: inherit; color: inherit; margin: 0; padding: 0; border: none; background: none; }
button { display: flex; align-items: center; justify-content: center; }
h1, h2, h3, ul { margin: 0; padding: 0; font-size: 10px; font-weight: normal; }
text { fill: #000; font-size: 10px; }
svg { flex: none; width: 14px; height: 14px; }
.sprite { position: absolute; width: 0; height: 0; }
.ico { width: 14px; height: 14px; }

/* title bar */
.titlebar { flex: none; display: flex; align-items: center; height: 24px; padding: 0 2px; gap: 4px; background: linear-gradient(#2c86f8, #0353dc 25%, #0058ee 55%, #0668fc 85%, #0340b4); }
.titlebar h1 { flex: 1; color: #fff; font: bold 12px/16px Roboto, sans-serif; text-shadow: 1px 1px #0f2d80; }
.win-buttons { display: flex; gap: 2px; }
.win-buttons button { width: 19px; height: 19px; border: 1px solid #fff; border-radius: 3px; background: linear-gradient(135deg, #7b9ff0, #2a5fd8 50%, #2357cb); }
.win-buttons .close { background: linear-gradient(135deg, #f0a088, #dd4d25 50%, #c93a12); }

/* menu */
.menubar { flex: none; display: flex; height: 18px; padding-left: 5px; gap: 10px; border-bottom: 1px solid #fbfaf4; }
.menubar button { height: 16px; }

/* tool bars */
.coolbar { flex: none; display: flex; height: 49px; border-top: 1px solid #d8d5c4; }
.toolbars { flex: 1; padding-top: 4px; overflow: hidden; }
.toolbar { display: flex; align-items: center; height: 20px; }
.tool { flex: none; width: 21px; height: 20px; }
.letter { color: #98958b; font: bold 13px/14px "Liberation Serif", serif; }
.italic { font-style: italic; }
.drop { flex: none; width: 11px; height: 20px; }
.drop::before { content: ""; border: 3px solid transparent; border-top-color: #000; border-bottom: 0; }
.drop.off::before { border-top-color: #c6c3b5; }
.sep { flex: none; width: 7px; height: 16px; background: linear-gradient(#c9c6b5, #c9c6b5) center / 1px 100% no-repeat; }
.grip { flex: none; width: 14px; height: 14px; background: repeating-linear-gradient(#aba897 0 2px, transparent 2px 4px) 8px 0 / 2px 100% no-repeat; }
.grip.first { width: 12px; background-position-x: 5px; }
.grip.wide { width: 24px; background-position-x: 18px; }
.swoop { width: 40px; height: 48px; }
.perspectives { width: 143px; padding: 3px 0; border-top: 2px solid #fff; }
.persp { height: 20px; padding: 0 4px; gap: 2px; border: 1px solid transparent; }
.persp.active { border-color: #86a0c6; border-radius: 3px; background: #fff; }
.perspectives .toolbar + .toolbar .persp { padding-left: 2px; }

/* workbench */
.workbench { flex: 1; min-height: 0; display: flex; gap: 3px; padding: 1px 4px 0; }
.sidebar { flex: none; width: 202px; display: flex; flex-direction: column; gap: 4px; }
.view { flex: 3 1 0; min-height: 0; display: flex; flex-direction: column; border: 1px solid #b3b0a0; border-radius: 7px 7px 0 0; padding: 0 1px 1px; box-shadow: inset 0 0 0 1px #dedbca; }
.outline-view { flex-grow: 4; }
.view-head { flex: none; display: flex; height: 20px; }
.tab { display: flex; align-items: center; gap: 2px; padding-left: 2px; border-radius: 6px 0 0 0; background: linear-gradient(#fff, #f0eee1); }
.x { position: relative; width: 11px; height: 11px; margin: 0 -7px 0 5px; }
.curve { width: 36px; height: 20px; }
.view-tools { flex: 1; display: flex; justify-content: flex-end; gap: 4px; padding-right: 2px; border-bottom: 1px solid #b3b0a0; }
.view-tools button { width: 13px; height: 14px; }
.view-tools svg { width: 12px; height: 12px; }
.view-bar { flex: none; display: flex; align-items: center; justify-content: flex-end; height: 24px; padding-right: 2px; border-bottom: 1px solid #b3b0a0; background: linear-gradient(#f0eee1, #ece9d8); }
.mini { width: 14px; height: 20px; align-items: flex-start; justify-content: flex-end; }
.mini svg { width: 12px; height: 12px; }
.view-body { flex: 1; min-height: 0; background: #fff; }
.tree { display: flex; align-items: flex-start; padding: 1px 6px; }
.tree .ico { margin: 1px 3px 0 6px; }
.expand { height: 16px; }
.expand svg { width: 9px; height: 9px; }
.selected { padding: 2px 4px 2px 1px; background: #ece9d8; }

.form-title { display: flex; align-items: center; gap: 4px; height: 32px; padding-left: 5px; border-bottom: 1px solid #bdcdf0; background: linear-gradient(#fff, #e9effa); color: #1f54c4; font-size: 16px; line-height: 20px; }
.form-row { display: flex; align-items: center; padding: 5px 12px 5px 5px; }
.form-row label { width: 48px; }
.form-row input { flex: 1; min-width: 0; height: 18px; padding-left: 3px; border: 1px solid #b3b0a0; border-width: 1px 0 0 1px; }
.form-row button { margin-left: 8px; font-weight: bold; font-size: 13px; }

.outline-body { display: flex; overflow: hidden; }
.outline { flex: 1; display: flex; flex-direction: column; list-style: none; margin-left: 10px; border-left: 1px dotted #c0c0c0; }
.outline li { flex: 1; min-height: 0; display: flex; align-items: center; gap: 3px; }
.outline li::before { content: ""; width: 7px; border-top: 1px dotted #b0b0b0; }
.outline svg { width: 14px; height: 12px; }
.outline .peek { flex: none; height: 2px; align-items: flex-start; overflow: hidden; }
.dot { flex: none; display: flex; align-items: center; justify-content: center; width: 14px; height: 14px; border: 1px solid #222; border-radius: 50%; background: #ffff3c; font-size: 8px; line-height: 10px; }
.dot.big { width: 20px; height: 20px; border-width: 2px; font-size: 10px; }
.scrollbar { flex: none; width: 14px; display: flex; flex-direction: column; gap: 1px; padding: 1px 0; background: #f7f7f3; }
.scrollbar button, .thumb { flex: none; height: 14px; border: 1px solid #b4c8f6; border-radius: 2px; background: linear-gradient(90deg, #d3e0fd, #b9cbf8); }
.scrollbar svg { width: 10px; height: 10px; }
.scrollbar .thumb { flex: 9 1 0; display: flex; align-items: center; justify-content: center; background: linear-gradient(90deg, #cbdafd, #b7cafa); }
.track { flex: 2 1 0; }

/* editor */
.editor { flex: 1; min-width: 0; display: flex; flex-direction: column; border: 1px solid #b3b0a0; border-radius: 7px 7px 0 0; }
.editor-head { flex: none; display: flex; height: 20px; }
.etab { display: flex; align-items: center; gap: 3px; padding: 0 2px; border-bottom: 1px solid #b3b0a0; }
.etab.active { padding: 0 0 0 3px; border-bottom: 0; border-radius: 6px 0 0 0; background: linear-gradient(#d3e0fb, #99b5f3); }
.etab.story, .etab.last { padding: 0 21px 0 4px; border-right: 1px solid #b3b0a0; border-top-right-radius: 6px; }
.ecurve { width: 26px; height: 20px; }
.editor-body { flex: 1; min-height: 0; display: flex; border: 2px solid #9ab6f4; }

.sheet { flex: 1; min-width: 0; display: grid; grid-template: 14px 1fr / 15px 1fr; background: #fff; }
.ruler-h { grid-column: 1 / 3; width: 100%; height: 14px; border-bottom: 1px solid #c5c3b2; }
.ruler-v { width: 15px; height: 100%; border-right: 2px solid #d4d2c4; }
.ruler-h text, .ruler-v text { font-size: 9px; }

/* sketch widgets, freely placed on the canvas */
.canvas { position: relative; overflow: hidden; }
.canvas > * { position: absolute; }
.w-button { left: 86px; top: 73px; width: 36px; height: 21px; padding-right: 2px; border: 2px solid #111; border-radius: 4px; background: #ece9d8; }
.w-window { left: 130px; top: 73px; width: 363px; height: 272px; border: 2px solid #111; }
.w-window-title { display: flex; align-items: stretch; justify-content: space-between; height: 18px; padding-left: 7px; border-bottom: 2px solid #111; line-height: 15px; }
.w-window-title button { width: 19px; border-left: 2px solid #111; }
.w-tabset { left: 362px; top: 52px; width: 132px; height: 23px; }
.w-textarea { left: 139px; top: 109px; width: 166px; height: 103px; padding: 1px; border: 2px solid #111; background: #fff; resize: none; overflow: hidden; }
.w-choice { left: 139px; display: flex; align-items: center; gap: 2px; height: 14px; }
.w-choice input { appearance: none; width: 13px; height: 13px; border: 2px solid #111; }
.radio { top: 228px; }
.radio input { border-radius: 50%; }
.check { top: 250px; }
.w-slider { appearance: none; }
.w-slider.horizontal { left: 190px; top: 291px; width: 91px; height: 16px; background: linear-gradient(#111, #111) center / 100% 4px no-repeat; }
.w-slider.vertical { left: 430px; top: 159px; width: 16px; height: 91px; writing-mode: vertical-lr; background: linear-gradient(#111, #111) center / 4px 100% no-repeat; }
.w-slider::-webkit-slider-thumb { appearance: none; width: 16px; height: 16px; }
.horizontal::-webkit-slider-thumb { background: url("data:image/svg+xml,%3Csvg xmlns='http://www.w3.org/2000/svg' viewBox='0 0 16 16'%3E%3Cpath d='M2 7l6-6 6 6v7H2z' fill='%23fff' stroke='%23111' stroke-width='2'/%3E%3C/svg%3E"); }
.vertical::-webkit-slider-thumb { background: url("data:image/svg+xml,%3Csvg xmlns='http://www.w3.org/2000/svg' viewBox='0 0 16 16'%3E%3Cpath d='M2 2h7l6 6-6 6H2z' fill='%23fff' stroke='%23111' stroke-width='2'/%3E%3C/svg%3E"); }
.w-title { left: 502px; top: 60px; color: #bdbdbd; font-size: 38px; line-height: 46px; }
.w-treebox { left: 501px; top: 121px; width: 82px; height: 82px; }
.w-arrow { left: 517px; top: 236px; width: 16px; height: 22px; }
.w-group { left: 130px; top: 355px; width: 230px; height: 145px; margin: 0; padding: 0 5px; border: 2px solid #111; }
.w-group legend { padding: 0 4px 0 2px; }
.w-search { left: 139px; top: 377px; width: 58px; height: 19px; display: flex; align-items: center; gap: 2px; padding: 0 4px; border: 2px solid #111; border-radius: 10px; }
.w-search svg { width: 11px; height: 11px; }
.w-search input { flex: 1; min-width: 0; }
.w-search input::placeholder { color: #999; opacity: 1; }
.w-tooltip { left: 330px; top: 353px; width: 40px; height: 36px; }
.w-callout { left: 483px; top: 335px; width: 21px; height: 21px; border: 2px solid #111; border-radius: 50%; background: #ff0; font-weight: bold; line-height: 17px; text-align: center; }

/* palette */
.palette { flex: none; width: 169px; display: flex; flex-direction: column; border-left: 1px solid #b3b0a0; background: #fff; }
.palette-head { flex: none; display: flex; align-items: center; gap: 2px; height: 22px; padding: 0 8px 0 3px; border-bottom: 1px solid #c5c3b2; background: linear-gradient(#fdfdfa, #ece9d8); }
.palette-head span { flex: 1; }
.palette-head button svg { width: 8px; height: 12px; }
.palette-tools { flex: none; display: flex; gap: 10px; padding: 4px 3px; }
.item { flex-direction: column; justify-content: flex-start; width: 44px; line-height: 12px; }
.item svg { width: 20px; height: 16px; }
.palette-tools .item { height: 29px; justify-content: flex-end; }
.palette-tools .item svg { width: 15px; height: 15px; }
.item.on { background: #cfe0f8; }
.drawer { flex: 1 1 0; min-height: 0; display: flex; flex-direction: column; border-top: 1px solid #b3b0a0; }
.drawer.tall { flex-basis: 4px; }
.drawer.final { flex: none; height: 74px; }
.drawer h3 { flex: none; display: flex; align-items: center; gap: 2px; height: 19px; padding: 0 2px; background: linear-gradient(#f3f1e6, #ece9d8); }
.pin { width: 12px; height: 8px; margin-left: auto; }
.drawer-body { flex: 1; min-height: 0; position: relative; overflow: hidden; }
.items { display: grid; grid-template-columns: repeat(3, 44px); gap: 6px 10px; align-items: start; padding: 6px 3px 0; }
.items .item svg { margin: 2px 0 4px; }
.items .item b { display: flex; align-items: center; height: 20px; margin-bottom: 2px; font-family: "DejaVu Sans", sans-serif; }
.items .item .abc { font-size: 8px; }
.items .item .ab { font-size: 13px; }
.items .item .big { height: 20px; margin: 0 0 2px; }
.third { grid-column: 3; }
.scrolled { margin-top: -26px; }
.nudged { margin-top: -13px; }
.lowered { margin-top: 1px; }
.more { position: absolute; left: 50px; width: 69px; height: 6px; background: rgba(176, 174, 158, .85); }
.more.up { top: 0; }
.more.down { bottom: 0; }
.more::before { content: ""; position: absolute; left: 32px; top: 2px; border: 3px solid transparent; }
.more.up::before { border-bottom-color: #6d6b60; border-top: 0; }
.more.down::before { border-top-color: #6d6b60; border-bottom: 0; }

.statusbar { flex: none; display: flex; align-items: center; height: 28px; }
.spacer { flex: 1; }
.grip.end { width: 230px; background-position-x: 0; }
```
